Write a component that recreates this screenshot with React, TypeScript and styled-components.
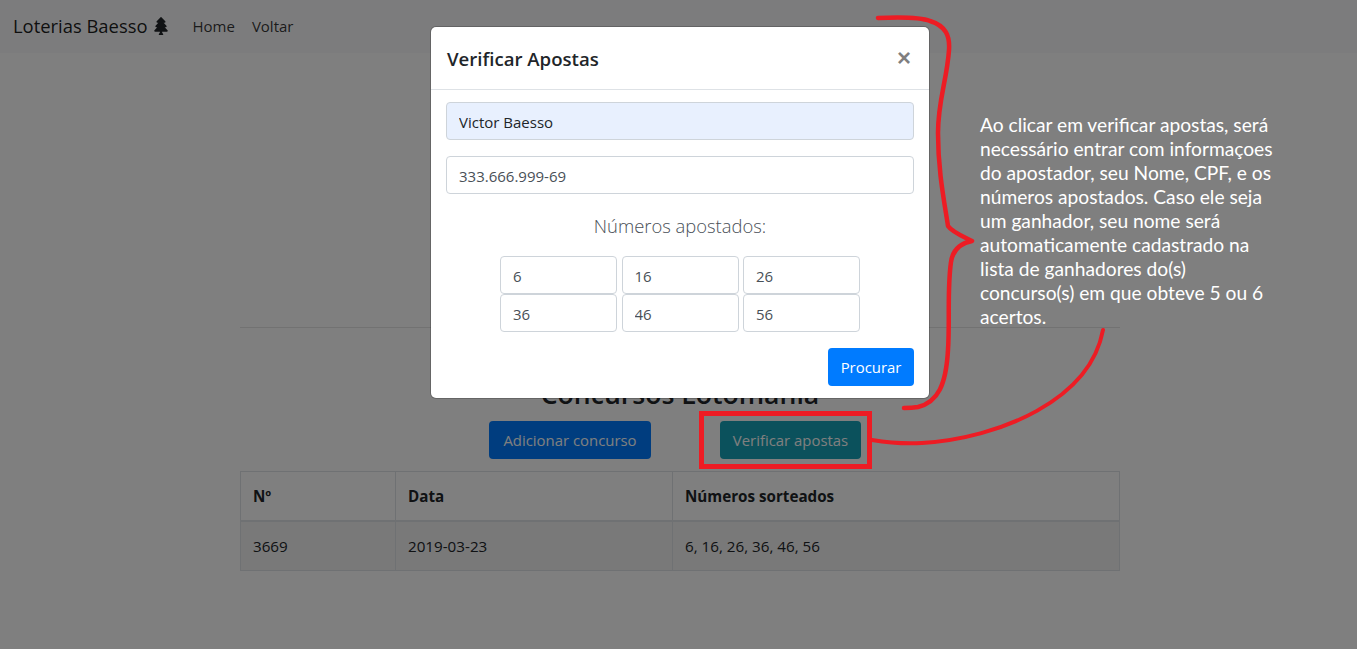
import React from "react";
import styled, { createGlobalStyle } from "styled-components";
import { FaTree } from "react-icons/fa";

const Global = createGlobalStyle`
  html, body {
    margin: 0;
    padding: 0;
    background: #fff;
    font-family: "Open Sans", "Liberation Sans", sans-serif;
    font-size: 15px;
    color: #212529;
  }
  * { box-sizing: border-box; }
`;

const Page = styled.div`
  position: relative;
  width: 1357px;
  height: 649px;
  overflow: hidden;
`;

const Navbar = styled.nav`
  display: flex;
  align-items: center;
  height: 53px;
  padding: 0 13px 2px;
  background: #f8f9fa;
`;

const Brand = styled.span`
  display: flex;
  align-items: center;
  gap: 5px;
  font-size: 18.4px;
  margin-right: 22px;
  color: rgba(0, 0, 0, 0.9);
`;

const NavLink = styled.a`
  font-size: 15px;
  margin-right: 17px;
  color: rgba(0, 0, 0, 0.8);
`;

const Main = styled.main`
  width: 880px;
  margin-left: 240px;
  padding-top: 274px;
`;

const Rule = styled.hr`
  margin: 0 0 48px;
  border: 0;
  border-top: 1px solid rgba(0, 0, 0, 0.1);
`;

const Title = styled.h2`
  margin: 0 0 9px;
  height: 36px;
  line-height: 36px;
  text-align: center;
  font-size: 26.6px;
  font-weight: 600;
`;

const Actions = styled.div`
  display: flex;
  justify-content: center;
  gap: 69px;
  margin-bottom: 12px;
  padding-right: 10px;
`;

const Button = styled.button<{ $bg: string; $w: number }>`
  width: ${(p) => p.$w}px;
  height: 38px;
  padding: 0;
  border: 0;
  border-radius: 4px;
  background: ${(p) => p.$bg};
  color: #fff;
  font-family: inherit;
  font-size: 14.9px;
`;

const Table = styled.table`
  width: 879px;
  border-collapse: collapse;
  table-layout: fixed;
  font-size: 15.2px;
`;

const Head = styled.th<{ $w: number }>`
  width: ${(p) => p.$w}px;
  height: 49px;
  padding: 0 12px;
  text-align: left;
  font-weight: 700;
  border: 1px solid #dee2e6;
  border-bottom-width: 2px;
`;

const Row = styled.tr`
  background: rgba(0, 0, 0, 0.05);
`;

const Cell = styled.td`
  height: 50px;
  padding: 1px 12px 0;
  border: 1px solid #dee2e6;
`;

const Backdrop = styled.div`
  position: absolute;
  inset: 0;
  background: rgba(0, 0, 0, 0.5);
`;

const Modal = styled.div`
  position: absolute;
  left: 431px;
  top: 27px;
  width: 498px;
  height: 371px;
  background: #fff;
  border-radius: 5px;
  box-shadow: 0 0 0 1px rgba(0, 0, 0, 0.2);
  display: flex;
  flex-direction: column;
`;

const ModalHeader = styled.header`
  display: flex;
  align-items: center;
  justify-content: space-between;
  height: 63px;
  padding: 0 18px 0 16px;
  border-bottom: 1px solid #dee2e6;
`;

const ModalTitle = styled.h5`
  margin: 0;
  font-size: 18.6px;
  font-weight: 600;
`;

const Close = styled.button`
  border: 0;
  padding: 0;
  background: none;
  font-family: "Liberation Sans", sans-serif;
  font-size: 24px;
  font-weight: 700;
  line-height: 1;
  color: rgba(0, 0, 0, 0.5);
`;

const ModalBody = styled.div`
  display: flex;
  flex-direction: column;
  gap: 16px;
  padding: 12px 15px 0;
`;

const Field = styled.input<{ $filled?: boolean }>`
  display: block;
  width: 100%;
  height: 38px;
  padding: 1px 12px 0;
  border: 1px solid #ced4da;
  border-radius: 4px;
  font-family: inherit;
  font-size: 15px;
  background: ${(p) => (p.$filled ? "#e8f0fe" : "#fff")};
  color: ${(p) => (p.$filled ? "#212529" : "#495057")};
  outline: none;
`;

const NumbersLabel = styled.div`
  margin-top: 2px;
  height: 29px;
  text-align: center;
  font-size: 18.4px;
  font-weight: 300;
  line-height: 28px;
  color: #495057;
`;

const NumbersGrid = styled.div`
  display: grid;
  grid-template-columns: repeat(3, 117px);
  column-gap: 4.5px;
  justify-content: center;
  margin-top: -1px;
`;

const Footer = styled.div`
  display: flex;
  justify-content: flex-end;
  padding: 16px 15px 0;
`;

const Drawing = styled.svg`
  position: absolute;
  left: 0;
  top: 0;
  pointer-events: none;
`;

const Note = styled.p`
  position: absolute;
  left: 980px;
  top: 113px;
  width: 340px;
  margin: 0;
  color: #fff;
  font-family: Lato, "Open Sans", sans-serif;
  font-size: 19.2px;
  line-height: 24px;
  white-space: pre-line;
`;

const numbers = ["6", "16", "26", "36", "46", "56"];

const noteText = `Ao clicar em verificar apostas, será
necessário entrar com informaçoes
do apostador, seu Nome, CPF, e os
números apostados. Caso ele seja
um ganhador, seu nome será
automaticamente cadastrado na
lista de ganhadores do(s)
concurso(s) em que obteve 5 ou 6
acertos.`;

export default function App() {
  return (
    <Page>
      <Global />
      <Navbar>
        <Brand>
          Loterias Baesso <FaTree size={18} color="#212529" />
        </Brand>
        <NavLink>Home</NavLink>
        <NavLink>Voltar</NavLink>
      </Navbar>
      <Main>
        <Rule />
        <Title>Concursos Lotomania</Title>
        <Actions>
          <Button $bg="#007bff" $w={162}>Adicionar concurso</Button>
          <Button $bg="#17a2b8" $w={141}>Verificar apostas</Button>
        </Actions>
        <Table>
          <thead>
            <tr>
              <Head $w={155}>Nº</Head>
              <Head $w={277}>Data</Head>
              <Head $w={447}>Números sorteados</Head>
            </tr>
          </thead>
          <tbody>
            <Row>
              <Cell>3669</Cell>
              <Cell>2019-03-23</Cell>
              <Cell>6, 16, 26, 36, 46, 56</Cell>
            </Row>
          </tbody>
        </Table>
      </Main>
      <Backdrop />
      <Modal>
        <ModalHeader>
          <ModalTitle>Verificar Apostas</ModalTitle>
          <Close>×</Close>
        </ModalHeader>
        <ModalBody>
          <Field $filled readOnly defaultValue="Victor Baesso" />
          <Field readOnly defaultValue="333.666.999-69" />
          <NumbersLabel>Números apostados:</NumbersLabel>
          <NumbersGrid>
            {numbers.map((n) => (
              <Field key={n} readOnly defaultValue={n} />
            ))}
          </NumbersGrid>
        </ModalBody>
        <Footer>
          <Button $bg="#007bff" $w={86}>Procurar</Button>
        </Footer>
      </Modal>
      <Drawing width="1357" height="649" fill="none" stroke="#ed1c24">
        <path
          d="M878 18 C900 17 920 17 930 21 C946 26 950 36 949 50 C947 80 938 100 938 133 C938 170 944 200 948 226 C952 232 962 236 972 241 C962 243 953 248 951 262 C947 290 950 320 948 350 C946 385 938 402 918 407 C912 408 908 408 904 408"
          strokeWidth="4.5"
          strokeLinecap="round"
          strokeLinejoin="round"
        />
        <rect x="701.5" y="413.5" width="168" height="53" strokeWidth="5" />
        <path
          d="M872 440 C890 443 905 444 922 443 C1000 438 1090 400 1103 330"
          strokeWidth="4"
          strokeLinecap="round"
        />
      </Drawing>
      <Note>{noteText}</Note>
    </Page>
  );
}
